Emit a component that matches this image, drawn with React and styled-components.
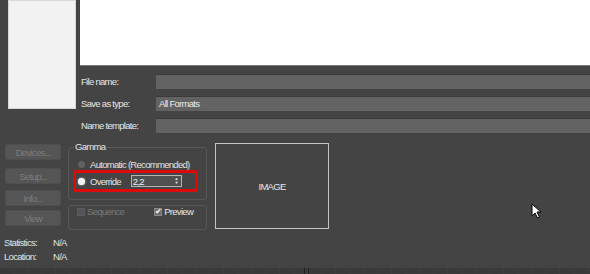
import React from 'react'
import styled, { createGlobalStyle } from 'styled-components'

const Global = createGlobalStyle`
body {
  margin: 0;
  background: #444;
  font-family: "Liberation Sans", Arial, sans-serif;
  font-size: 9.5px;
  letter-spacing: -0.7px;
  color: #e2e2e2;
}
`

const Window = styled.div`
position: relative;
width: 590px;
height: 274px;
overflow: hidden;
background: #444444;
display: flex;
flex-direction: column;
white-space: nowrap;
`
const TopRow = styled.div`
display: flex;
height: 137px;
`
const Places = styled.div`
margin-left: 8px;
width: 66px;
height: 107px;
background: #f2f2f2;
border: 1px solid #d8d8d8;
`
const Main = styled.div`
margin-left: 4px;
flex: 1;
display: flex;
flex-direction: column;
`
const Preview = styled.div`
height: 65px;
background: #ffffff;
border-bottom: 1px solid #7a7a7a;
`
const Fields = styled.div`
display: flex;
flex-direction: column;
gap: 7px;
padding-top: 8px;
`
const FieldRow = styled.div`
display: flex;
align-items: center;
height: 15px;
`
const Label = styled.label`
width: 75px;
padding-left: 1px;
color: #e6e6e6;
`
const Field = styled.div`
flex: 1;
height: 14px;
background: #636363;
border-top: 1px solid #3a3a3a;
padding-left: 3px;
line-height: 14px;
color: #eaeaea;
`
const Middle = styled.div`
display: flex;
align-items: flex-start;
margin-top: 5px;
`
const Buttons = styled.div`
margin-left: 5px;
width: 56px;
display: flex;
flex-direction: column;
gap: 8px;
padding-top: 2px;
`
const Button = styled.button`
height: 16px;
background: #555555;
border: 1px solid #4f4f4f;
border-radius: 2px;
color: #7d7d7d;
font-family: inherit;
font-size: inherit;
letter-spacing: inherit;
padding: 0;
margin-top: ${p => p.$gap || 0}px;
`
const Groups = styled.div`
margin-left: 7px;
width: 139px;
flex-shrink: 0;
display: flex;
flex-direction: column;
gap: 5px;
`
const Group = styled.fieldset`
margin: 0;
min-width: 0;
border: 1px solid #575757;
border-radius: 3px;
padding: 0 0 0 4px;
height: ${p => p.$h}px;
box-sizing: border-box;
display: flex;
flex-direction: column;
`
const Legend = styled.legend`
padding: 0 1px;
margin-left: 1px;
line-height: 10px;
color: #e6e6e6;
`
const RadioRow = styled.div`
display: flex;
align-items: center;
gap: 3px;
height: 14px;
margin-top: 5px;
padding-left: 5px;
`
const Radio = styled.span`
width: 7px;
height: 7px;
flex-shrink: 0;
border-radius: 50%;
background: ${p => (p.$on ? '#f4f4f4' : '#616161')};
box-shadow: ${p => (p.$on ? '0 0 2px #ddd' : 'none')};
margin-right: 2px;
`
const Highlight = styled.div`
margin-top: -1px;
margin-left: 0;
width: 125px;
height: 22px;
box-sizing: border-box;
border: 3px solid #dd0a0a;
border-radius: 3px;
display: flex;
align-items: center;
padding-left: 2px;
gap: 3px;
`
const Spinner = styled.div`
margin-left: 7px;
width: 45px;
height: 10px;
border: 1px solid #b5b5b5;
background: #505050;
display: flex;
align-items: center;
justify-content: space-between;
padding: 0 3px 0 1px;
color: #f0f0f0;
`
const Arrows = styled.span`
display: flex;
flex-direction: column;
font-size: 4px;
line-height: 4px;
color: #eee;
`
const CheckRow = styled.div`
display: flex;
align-items: center;
height: 100%;
padding-left: 4px;
gap: 30px;
`
const Check = styled.div`
display: flex;
align-items: center;
gap: 2px;
color: ${p => (p.$off ? '#7a7a7a' : '#e6e6e6')};
`
const Box = styled.span`
width: 6px;
height: 6px;
background: ${p => (p.$off ? '#555' : '#6d6d6d')};
border: 1px solid ${p => (p.$off ? '#5c5c5c' : '#8a8a8a')};
color: #fff;
font-size: 8px;
letter-spacing: 0;
line-height: 6px;
text-align: center;
`
const ImageBox = styled.div`
margin-left: 8px;
margin-top: 1px;
width: 112px;
height: 84px;
border: 1px solid #c4c4c4;
display: flex;
align-items: center;
justify-content: center;
color: #e8e8e8;
`
const Stats = styled.div`
margin-top: 7px;
padding-left: 4px;
display: grid;
grid-template-columns: 49px auto;
row-gap: 3px;
line-height: 11px;
`
const Strip = styled.div`
margin-top: auto;
height: 6px;
background: repeating-linear-gradient(90deg, #3a3a3a 0 13px, #3f3f3f 13px 14px);
position: relative;
`
const Divider = styled.span`
position: absolute;
left: 304px;
top: 0;
width: 3px;
height: 6px;
border-left: 1px solid #1e1e1e;
border-right: 1px solid #1e1e1e;
`
const Cursor = styled.svg`
position: absolute;
left: 531px;
top: 203px;
`

export default function App() {
  return (
    <Window>
      <Global />
      <TopRow>
        <Places />
        <Main>
          <Preview />
          <Fields>
            <FieldRow>
              <Label>File name:</Label>
              <Field />
            </FieldRow>
            <FieldRow>
              <Label>Save as type:</Label>
              <Field>All Formats</Field>
            </FieldRow>
            <FieldRow>
              <Label>Name template:</Label>
              <Field />
            </FieldRow>
          </Fields>
        </Main>
      </TopRow>
      <Middle>
        <Buttons>
          <Button>Devices...</Button>
          <Button>Setup...</Button>
          <Button $gap={-2}>Info...</Button>
          <Button $gap={-4}>View</Button>
        </Buttons>
        <Groups>
          <Group $h={58}>
            <Legend>Gamma</Legend>
            <RadioRow>
              <Radio />
              Automatic (Recommended)
            </RadioRow>
            <Highlight>
              <Radio $on />
              Override
              <Spinner>
                2,2
                <Arrows>
                  <span>▲</span>
                  <span>▼</span>
                </Arrows>
              </Spinner>
            </Highlight>
          </Group>
          <Group $h={25}>
            <CheckRow>
              <Check $off>
                <Box $off />
                Sequence
              </Check>
              <Check>
                <Box>✔</Box>
                Preview
              </Check>
            </CheckRow>
          </Group>
        </Groups>
        <ImageBox>IMAGE</ImageBox>
      </Middle>
      <Stats>
        <span>Statistics:</span>
        <span>N/A</span>
        <span>Location:</span>
        <span>N/A</span>
      </Stats>
      <Strip>
        <Divider />
      </Strip>
      <Cursor width="12" height="16" viewBox="0 0 12 16">
        <path d="M1 1 L1 13 L4 10 L6.5 15 L8.5 14 L6 9 L10 9 Z" fill="#fff" stroke="#000" strokeWidth="1" />
      </Cursor>
    </Window>
  )
}
